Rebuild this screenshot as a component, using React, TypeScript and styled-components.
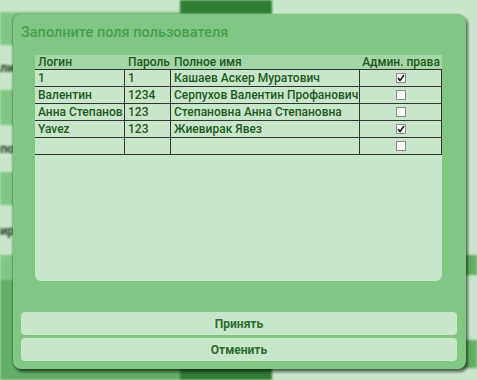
import React from "react";
import styled, { createGlobalStyle } from "styled-components";

const GlobalStyle = createGlobalStyle`
  html, body { margin: 0; padding: 0; }
  body {
    width: 477px;
    height: 380px;
    overflow: hidden;
    font-family: Roboto, "Noto Sans", "DejaVu Sans", sans-serif;
  }
`;

const LIGHT = "#c8e6c9";
const MID = "#81c784";
const DARK = "#62af65";
const DEEP = "#2f7f33";

type Tone = "light" | "mid" | "dark" | "deep";
const toneColor = (t: Tone) =>
  t === "light" ? LIGHT : t === "mid" ? MID : t === "dark" ? DARK : DEEP;

const Screen = styled.div`
  position: relative;
  width: 477px;
  height: 380px;
  overflow: hidden;
  background: ${LIGHT};
`;

const Backdrop = styled.div`
  display: flex;
  width: 100%;
  height: 100%;
  filter: blur(1.2px);
`;

const BgColumn = styled.div<{ $w?: number }>`
  width: ${(p) => (p.$w ? `${p.$w}px` : "auto")};
  flex: ${(p) => (p.$w ? "none" : "1")};
  display: flex;
  flex-direction: column;
`;

const Band = styled.div<{ $tone: Tone; $h?: number }>`
  height: ${(p) => (p.$h ? `${p.$h}px` : "auto")};
  flex: ${(p) => (p.$h ? "none" : "1")};
  background: ${(p) => toneColor(p.$tone)};
  display: flex;
  align-items: center;
  font-size: 13px;
  font-weight: 700;
  color: #1f3f21;
  white-space: nowrap;
  overflow: hidden;
`;

const Dialog = styled.div`
  position: absolute;
  left: 13px;
  top: 14px;
  width: 453px;
  height: 355px;
  box-sizing: border-box;
  background: ${MID};
  border-radius: 8px;
  box-shadow: 2px 3px 3px rgba(0, 0, 0, 0.55), -1px 0 2px rgba(0, 0, 0, 0.25);
  display: flex;
  flex-direction: column;
  padding: 0 9px 8px 8px;
`;

const Title = styled.div`
  height: 41px;
  box-sizing: border-box;
  padding-top: 9px;
  font-size: 14.5px;
  line-height: 20px;
  font-weight: 500;
  color: #47a04a;
`;

const TablePanel = styled.div`
  margin: 0 15px 0 14px;
  height: 226px;
  background: ${LIGHT};
  border-radius: 0 0 6px 6px;
  overflow: hidden;
`;

const Row = styled.div<{ $header?: boolean }>`
  display: grid;
  grid-template-columns: 90px 46px 189px 82px;
  height: ${(p) => (p.$header ? 14 : 16)}px;
  border-bottom: 1px solid #333;
  background: ${(p) => (p.$header ? "#a5d6a7" : "transparent")};
`;

const Cell = styled.div<{ $header?: boolean; $center?: boolean }>`
  box-sizing: border-box;
  border-right: ${(p) => (p.$header ? "none" : "1px solid #333")};
  padding-left: ${(p) => (p.$center ? 0 : 3)}px;
  display: flex;
  align-items: center;
  justify-content: ${(p) => (p.$center ? "center" : "flex-start")};
  font-size: 12px;
  font-weight: 500;
  color: #1f5a22;
  white-space: nowrap;
  overflow: hidden;
`;

const Box = styled.span`
  width: 10px;
  height: 10px;
  box-sizing: border-box;
  border: 1px solid #8a8a8a;
  background: #fbfbfb;
  display: inline-flex;
  align-items: center;
  justify-content: center;
`;

const Buttons = styled.div`
  margin-top: 31px;
  display: flex;
  flex-direction: column;
  gap: 3px;
`;

const Button = styled.button`
  height: 23px;
  border: none;
  border-radius: 4px;
  background: ${LIGHT};
  font-family: inherit;
  font-weight: 700;
  font-size: 12px;
  color: #2e6b30;
  padding: 0;
`;

const Check = ({ on }: { on: boolean }) => (
  <Box>
    {on && (
      <svg width="8" height="8" viewBox="0 0 8 8">
        <polyline points="1,4 3,6.5 7,1" fill="none" stroke="#111" strokeWidth="1.4" />
      </svg>
    )}
  </Box>
);

const users = [
  { login: "1", pass: "1", name: "Кашаев Аскер Муратович", admin: true },
  { login: "Валентин", pass: "1234", name: "Серпухов Валентин Профанович", admin: false },
  { login: "Анна Степанов", pass: "123", name: "Степановна Анна Степановна", admin: false },
  { login: "Yavez", pass: "123", name: "Жиевирак Явез", admin: true },
  { login: "", pass: "", name: "", admin: false },
];

export default function App() {
  return (
    <Screen>
      <GlobalStyle />
      <Backdrop>
        <BgColumn $w={180}>
          <Band $tone="light" $h={12} />
          <Band $tone="mid" $h={33} />
          <Band $tone="light" $h={45}>листы</Band>
          <Band $tone="mid" $h={35} />
          <Band $tone="light" $h={47}>поля</Band>
          <Band $tone="mid" $h={33} />
          <Band $tone="light" $h={50}>ирование</Band>
          <Band $tone="mid" $h={25} />
          <Band $tone="dark" />
        </BgColumn>
        <BgColumn $w={92}>
          <Band $tone="deep" $h={14} />
          <Band $tone="light" />
          <Band $tone="deep" $h={20} />
        </BgColumn>
        <BgColumn>
          <Band $tone="light" $h={255} />
          <Band $tone="dark" $h={20} />
          <Band $tone="light" $h={65} />
          <Band $tone="dark" $h={28} />
          <Band $tone="light" />
        </BgColumn>
      </Backdrop>

      <Dialog>
        <Title>Заполните поля пользователя</Title>
        <TablePanel>
          <Row $header>
            <Cell $header>Логин</Cell>
            <Cell $header>Пароль</Cell>
            <Cell $header>Полное имя</Cell>
            <Cell $header $center>Админ. права</Cell>
          </Row>
          {users.map((u, i) => (
            <Row key={i}>
              <Cell>{u.login}</Cell>
              <Cell>{u.pass}</Cell>
              <Cell>{u.name}</Cell>
              <Cell $center>
                <Check on={u.admin} />
              </Cell>
            </Row>
          ))}
        </TablePanel>
        <Buttons>
          <Button>Принять</Button>
          <Button>Отменить</Button>
        </Buttons>
      </Dialog>
    </Screen>
  );
}
